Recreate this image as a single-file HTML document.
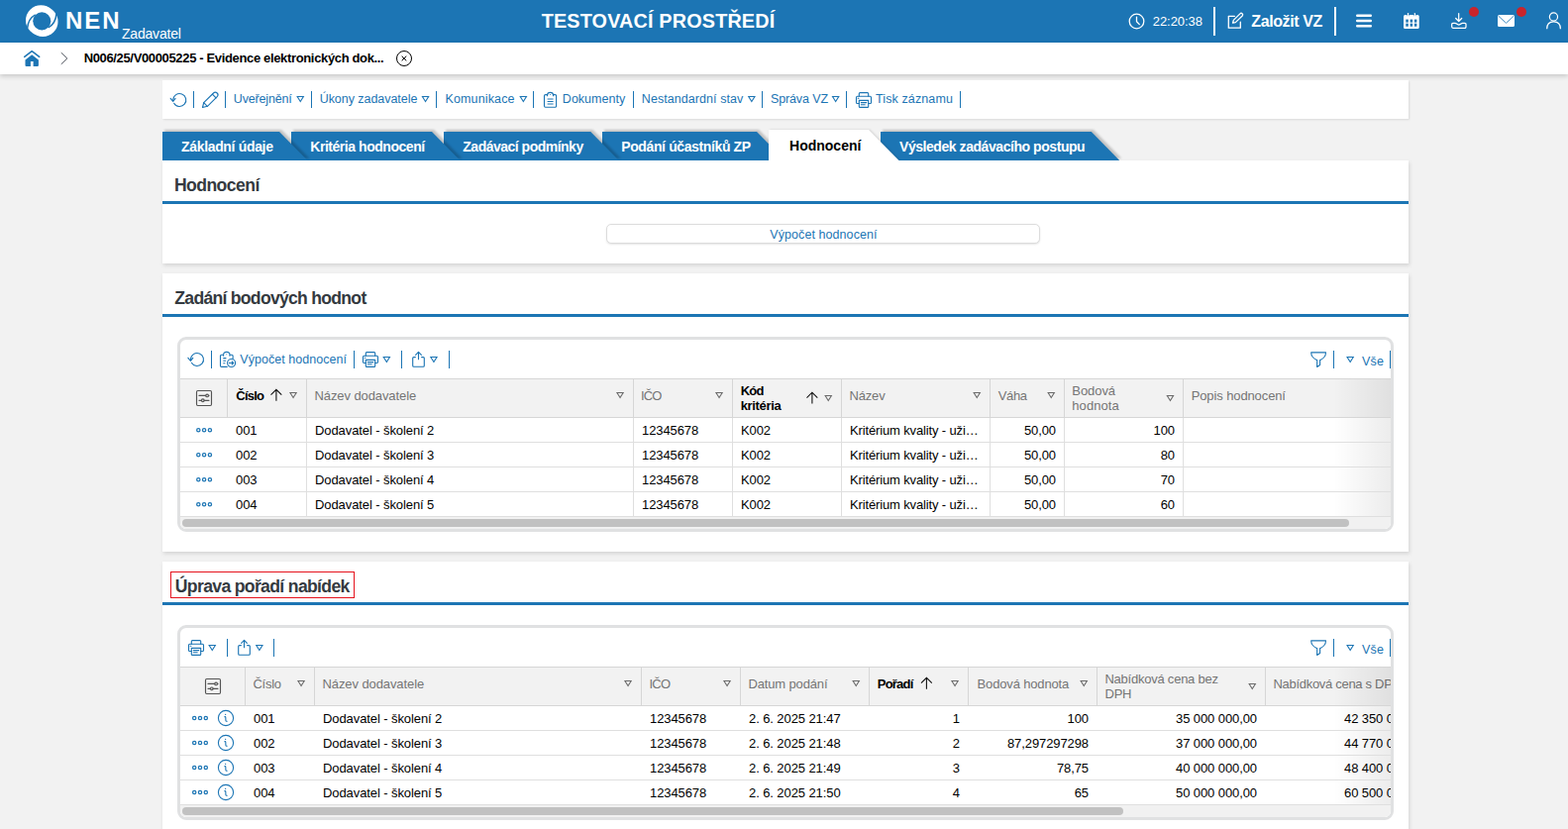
<!DOCTYPE html>
<html lang="cs">
<head>
<meta charset="utf-8">
<title>NEN – Hodnocení</title>
<style>
*{box-sizing:border-box;}
html,body{margin:0;padding:0;}
body{width:1583px;height:837px;overflow:hidden;background:#f2f2f2;font-family:"Liberation Sans",sans-serif;font-size:13px;color:#000;position:relative;}
svg{display:block;overflow:visible;}
.abs{position:absolute;}
.t{position:absolute;white-space:nowrap;line-height:1;}
#top{position:absolute;left:0;top:0;width:1583px;height:43px;background:#1c75b4;color:#fff;}
#top .vsep{position:absolute;top:7px;width:2px;height:29px;background:#fff;}
#top .dot{position:absolute;width:10px;height:10px;border-radius:50%;background:#c9252c;}
#crumb{position:absolute;left:0;top:43px;width:1583px;height:32px;background:#fff;box-shadow:0 2px 5px rgba(0,0,0,.18);}
.panel{position:absolute;left:164px;width:1258px;background:#fff;box-shadow:.5px 2px 4px rgba(0,0,0,.13);}
.blue{color:#1c75b4;}
.pline{position:absolute;left:164px;width:1258px;height:3px;background:#1c75b4;}

#tabs{position:absolute;left:0;top:120px;width:1583px;height:42px;overflow:hidden;}
.tab{position:absolute;top:13px;height:29px;filter:drop-shadow(2px -1.5px 1px rgba(0,0,0,.2));}
.tab i{display:block;width:100%;height:100%;background:#1c75b4;}
.tab.act{top:11px;height:31px;filter:drop-shadow(1.5px 0 1px rgba(0,0,0,.16));}
.tab.act i{background:#fff;}
#tablabels{position:absolute;left:0;top:0;z-index:30;}

.btn{position:absolute;border:1px solid #dcdcdc;border-radius:5px;background:#fff;box-shadow:0 1px 2px rgba(0,0,0,.10);}
.grid{position:absolute;border:3px solid #e0e1e2;border-radius:9px;background:#fff;}
.gwrap{position:absolute;overflow:hidden;background:#fff;border-radius:0 0 6px 6px;}
.gwrap table{border-collapse:separate;border-spacing:0;table-layout:fixed;position:absolute;left:0;top:0;}
.gwrap th{position:relative;height:40px;padding:0;background:#f2f2f2;border-top:1px solid #d6d6d6;border-bottom:1px solid #d6d6d6;border-right:1px solid #d6d6d6;font-weight:normal;text-align:left;color:#757575;}
.gwrap th.srt{color:#000;font-weight:bold;}
.gwrap td{position:relative;height:25px;padding:2px 8px 0;border-bottom:1px solid #dfdfdf;line-height:22px;white-space:nowrap;overflow:hidden;font-size:13px;letter-spacing:-.09px;color:#000;}
.gwrap td.el{letter-spacing:-.14px;}
.gwrap.vl td{border-right:1px solid #dfdfdf;}
.gwrap.vl td.ic{border-right:0;}
.gwrap td.r{text-align:right;}
#grid2 td.r{padding-right:9px;}
.gwrap td.ic{padding:0;}
.sbar{position:absolute;left:0;height:12px;width:100%;background:#f1f1f1;}
.sbar b{position:absolute;top:2px;height:8px;border-radius:4px;background:#c1c1c1;}
.fade{position:absolute;right:0;top:0;width:58px;background:linear-gradient(to right,rgba(0,0,0,0),rgba(0,0,0,.075));pointer-events:none;}
.redbox{position:absolute;border:1px solid #e5131d;}
.o{position:absolute;width:0;height:0;}
</style>
</head>
<body>
<div id="top">
<svg class="abs" style="left:25.7px;top:4.7px" width="32.5" height="32.3" viewBox="0 0 32.5 32.3">
<circle cx="15.3" cy="15.5" r="15.3" fill="#fff"/>
<circle cx="17.2" cy="16.8" r="15.3" fill="#fff"/>
<path d="M32.5 12.2L30.6 8.2L34 7.5Z M0 20.4L1.9 24.4L-1.5 25Z" fill="#1c75b4"/>
<circle cx="16.26" cy="16.34" r="9.05" fill="#1c75b4"/>
<path d="M1.6 23.6Q2.3 14 9.7 9.9" fill="none" stroke="#1c75b4" stroke-width="1.5"/>
<path d="M30.9 9.1Q30.2 18.7 22.8 22.8" fill="none" stroke="#1c75b4" stroke-width="1.5"/>
</svg>
<span class="t" id="nen" style="left:65.91px;top:8px;font-size:24px;line-height:26px;letter-spacing:1.98px;font-weight:bold;">NEN</span>
<span class="t" id="zad" style="left:123px;top:26px;font-size:14px;line-height:16px;letter-spacing:-0.204px;">Zadavatel</span>
<span class="t" id="env" style="left:546.7px;top:11px;font-size:19.8px;line-height:20px;letter-spacing:0.18px;font-weight:bold;">TESTOVACÍ PROSTŘEDÍ</span>
<svg class="abs" style="left:1139px;top:12.5px" width="17" height="17" viewBox="0 0 17 17" fill="none" stroke="#fff" stroke-width="1.3" stroke-linecap="round" stroke-linejoin="round">
<circle cx="8.5" cy="8.5" r="7.3"/><path d="M8.5 4.2V8.7L11.3 11.6"/></svg>
<span class="t" id="clock" style="left:1163.7px;top:14px;font-size:13px;line-height:15px;letter-spacing:-0.038px;">22:20:38</span>
<div class="vsep" style="left:1225px"></div>
<svg class="abs" style="left:1239px;top:12px" width="17" height="17" viewBox="0 0 17 17" fill="none" stroke="#fff" stroke-width="1.3" stroke-linecap="round" stroke-linejoin="round">
<path d="M7.4 4.4H1.3V16.2H13.3V10.2"/>
<path d="M12.9 1.9A1.5 1.5 0 0 1 15.2 4L8.3 10.6L5.6 11.2L6.3 8.4Z"/></svg>
<span class="t" id="zal" style="left:1263.3px;top:12.8px;font-size:16px;line-height:18px;letter-spacing:-0.41px;font-weight:bold;">Založit VZ</span>
<div class="vsep" style="left:1347px"></div>
<svg class="abs" style="left:1369px;top:14px" width="16" height="14" viewBox="0 0 16 14" fill="none" stroke="#fff" stroke-width="2.4" stroke-linecap="round"><path d="M1.2 1.7H14.8M1.2 7H14.8M1.2 12.3H14.8"/></svg>
<svg class="abs" style="left:1417px;top:13px" width="16" height="16" viewBox="0 0 16 16">
<rect x="0" y="2.1" width="15.7" height="13.8" rx="1.5" fill="#fff"/>
<rect x="3.9" y="0" width="1.3" height="3.6" rx=".6" fill="#fff"/>
<rect x="10.7" y="0" width="1.3" height="3.6" rx=".6" fill="#fff"/>
<g fill="#1c75b4">
<rect x="2.3" y="6.6" width="2.5" height="3"/><rect x="6.6" y="6.6" width="2.5" height="3"/><rect x="10.9" y="6.6" width="2.5" height="3"/>
<rect x="2.3" y="10.7" width="2.5" height="3"/><rect x="6.6" y="10.7" width="2.5" height="3"/><rect x="10.9" y="10.7" width="2.5" height="3"/>
<rect x="3.3" y="1" width=".5" height="2.2"/><rect x="5.3" y="1" width=".5" height="2.2"/><rect x="10.1" y="1" width=".5" height="2.2"/><rect x="12.1" y="1" width=".5" height="2.2"/>
</g></svg>
<svg class="abs" style="left:1465px;top:13px" width="16" height="16" viewBox="0 0 16 16" fill="none" stroke="#fff" stroke-width="1.25" stroke-linecap="round" stroke-linejoin="round">
<path d="M7.7 .5V8.2M4.7 5.5L7.7 8.5L10.7 5.5"/>
<path d="M.7 11.5A1.2 1.2 0 0 1 1.9 10.3H4.1C5.4 10.3 5.9 12 7.8 12S10.2 10.3 11.5 10.3H13.8A1.2 1.2 0 0 1 15 11.5V14.1A1.2 1.2 0 0 1 13.8 15.3H1.9A1.2 1.2 0 0 1 .7 14.1Z"/></svg>
<div class="dot" style="left:1483px;top:7px"></div>
<svg class="abs" style="left:1512px;top:15px" width="17" height="12" viewBox="0 0 17 12">
<rect x="0" y="0" width="17" height="12" rx="1.6" fill="#fff"/>
<path d="M.8 1.2L8.5 8.3L16.2 1.2" fill="none" stroke="#1c75b4" stroke-width=".8"/></svg>
<div class="dot" style="left:1531px;top:7px"></div>
<svg class="abs" style="left:1560px;top:13px" width="17" height="17" viewBox="0 0 17 17" fill="none" stroke="#fff" stroke-width="1.2" stroke-linecap="butt">
<circle cx="8.45" cy="4" r="4.1"/><path d="M1.7 16.2C1.7 11.4 4.6 8.9 8.55 8.9S15.4 11.4 15.4 16.2"/></svg>
</div>
<div id="crumb"></div>
<div id="crumbitems">
<svg class="abs" style="left:24px;top:51px" width="17" height="17" viewBox="0 0 17 17">
<path d="M.7 6.4L8.2 .7L15.7 6.4" fill="none" stroke="#1c75b4" stroke-width="1.5" stroke-linecap="round" stroke-linejoin="round"/>
<path d="M1.5 9.4L8.2 4.2L14.9 9.4V15A1 1 0 0 1 13.9 16H9.6V10.9H6.9V16H2.5A1 1 0 0 1 1.5 15Z" fill="#1c75b4"/></svg>
<svg class="abs" style="left:61px;top:53px" width="8" height="12" viewBox="0 0 8 12" fill="none" stroke="#3a3f4a" stroke-width=".95"><path d="M.8 .2L6.8 6L.8 11.8"/></svg>
<span class="t" id="bc" style="left:84.67px;top:52px;font-size:13px;line-height:14px;letter-spacing:-0.348px;color:#000;font-weight:bold;">N006/25/V00005225 - Evidence elektronických dok...</span>
<svg class="abs" style="left:400px;top:51px" width="16" height="16" viewBox="0 0 16 16" fill="none" stroke="#000" stroke-width="1"><circle cx="8" cy="8" r="7.5"/><path d="M5.7 5.7L10.3 10.3M10.3 5.7L5.7 10.3"/></svg>
</div>
<div class="panel" style="top:81px;height:39px;box-shadow:.5px 1px 2px rgba(0,0,0,.1)"></div>
<div id="toolbar" class="blue">
<svg class="abs" style="left:171px;top:92px" width="20" height="18" viewBox="171 92 20 18" fill="none" stroke="#1c75b4" stroke-width="1.12" stroke-linecap="round" stroke-linejoin="round"><path d="M175.67 104.25A6.5 6.5 0 1 0 174.80 100.89"/><path d="M172.20 99.29L174.70 102.29L177.10 99.39"/></svg>
<div class="abs" style="left:195px;top:92px;width:1px;height:17px;background:#1c75b4"></div>
<svg class="abs" style="left:203px;top:92px" width="19" height="19" viewBox="203 92 19 19" fill="none" stroke="#1c75b4" stroke-width="1.12" stroke-linecap="round" stroke-linejoin="round"><path d="M204.50 108.50L205.70 103.60L215.50 94.00A2.6 2.6 0 0 1 219.20 97.70L209.40 107.30Z"/><path d="M205.70 103.60L209.40 107.30M214.40 95.10L218.10 98.80"/></svg>
<div class="abs" style="left:227px;top:92px;width:1px;height:17px;background:#1c75b4"></div>
<span class="t" id="tb_Uve" style="left:235.86px;top:91.5px;font-size:12.5px;line-height:16px;letter-spacing:-0.17px;">Uveřejnění</span>
<svg class="abs" style="left:298px;top:96px" width="10" height="9" viewBox="298 96 10 9" fill="none" stroke="#1c75b4" stroke-width="1.1" stroke-linejoin="miter"><path d="M300.15 97.50H306.35L303.25 102.45Z"/></svg>
<div class="abs" style="left:314px;top:92px;width:1px;height:17px;background:#1c75b4"></div>
<span class="t" id="tb_Úko" style="left:322.67px;top:91.5px;font-size:12.5px;line-height:16px;letter-spacing:-0.042px;">Úkony zadavatele</span>
<svg class="abs" style="left:424px;top:96px" width="10" height="9" viewBox="424 96 10 9" fill="none" stroke="#1c75b4" stroke-width="1.1" stroke-linejoin="miter"><path d="M426.45 97.50H432.65L429.55 102.45Z"/></svg>
<div class="abs" style="left:440px;top:92px;width:1px;height:17px;background:#1c75b4"></div>
<span class="t" id="tb_Kom" style="left:449.48px;top:91.5px;font-size:12.5px;line-height:16px;letter-spacing:0.14px;">Komunikace</span>
<svg class="abs" style="left:523px;top:96px" width="10" height="9" viewBox="523 96 10 9" fill="none" stroke="#1c75b4" stroke-width="1.1" stroke-linejoin="miter"><path d="M525.25 97.50H531.45L528.35 102.45Z"/></svg>
<div class="abs" style="left:538px;top:92px;width:1px;height:17px;background:#1c75b4"></div>
<svg class="abs" style="left:548px;top:92px" width="16" height="19" viewBox="548 92 16 19" fill="none" stroke="#1c75b4" stroke-width="1.12" stroke-linecap="round" stroke-linejoin="round"><path d="M552.60 95.60H550.70A1.2 1.2 0 0 0 549.50 96.80V107.10A1.2 1.2 0 0 0 550.70 108.30H560.40A1.2 1.2 0 0 0 561.60 107.10V96.80A1.2 1.2 0 0 0 560.40 95.60H558.50"/><path d="M552.60 96.80V96.00A2.95 2.6 0 0 1 558.50 96.00V96.80"/><circle cx="555.55" cy="95.50" r=".55" fill="#1c75b4" stroke="none"/><path d="M552.60 100.00H558.60M552.60 102.50H558.60M552.60 105.00H558.60" stroke-linecap="butt"/></svg>
<span class="t" id="tb_Dok" style="left:567.86px;top:91.5px;font-size:12.5px;line-height:16px;letter-spacing:0.012px;">Dokumenty</span>
<div class="abs" style="left:639px;top:92px;width:1px;height:17px;background:#1c75b4"></div>
<span class="t" id="tb_Nes" style="left:647.86px;top:91.5px;font-size:12.5px;line-height:16px;letter-spacing:0.061px;">Nestandardní stav</span>
<svg class="abs" style="left:754px;top:96px" width="10" height="9" viewBox="754 96 10 9" fill="none" stroke="#1c75b4" stroke-width="1.1" stroke-linejoin="miter"><path d="M755.75 97.50H761.95L758.85 102.45Z"/></svg>
<div class="abs" style="left:769px;top:92px;width:1px;height:17px;background:#1c75b4"></div>
<span class="t" id="tb_Spr" style="left:777.91px;top:91.5px;font-size:12.5px;line-height:16px;letter-spacing:-0.109px;">Správa VZ</span>
<svg class="abs" style="left:839px;top:96px" width="10" height="9" viewBox="839 96 10 9" fill="none" stroke="#1c75b4" stroke-width="1.1" stroke-linejoin="miter"><path d="M840.55 97.50H846.75L843.65 102.45Z"/></svg>
<div class="abs" style="left:854px;top:92px;width:1px;height:17px;background:#1c75b4"></div>
<svg class="abs" style="left:863px;top:92px" width="18" height="19" viewBox="863 92 18 19" fill="none" stroke="#1c75b4" stroke-width="1.12" stroke-linecap="round" stroke-linejoin="round"><path d="M867.30 97.30V94.60A1 1 0 0 1 868.30 93.60H875.70A1 1 0 0 1 876.70 94.60V97.30"/><path d="M867.30 104.50H865.60A1.1 1.1 0 0 1 864.50 103.40V98.40A1.1 1.1 0 0 1 865.60 97.30H878.40A1.1 1.1 0 0 1 879.50 98.40V103.40A1.1 1.1 0 0 1 878.40 104.50H876.70"/><path d="M867.30 101.40H876.70V107.40A1 1 0 0 1 875.70 108.40H868.30A1 1 0 0 1 867.30 107.40Z"/><path d="M869.30 103.60H874.70M869.30 105.70H873.20M866.20 99.30H866.90"/></svg>
<span class="t" id="tb_Tis" style="left:884.0px;top:91.5px;font-size:12.5px;line-height:16px;letter-spacing:0.115px;">Tisk záznamu</span>
<div class="abs" style="left:969px;top:92px;width:1px;height:17px;background:#1c75b4"></div>
</div>
<div id="tabs">
<div class="tab" style="left:164px;width:146.5px;z-index:10"><i style="clip-path:polygon(0 0,118.0px 0,100% 100%,0 100%)"></i></div>
<div class="tab" style="left:294px;width:170.5px;z-index:9"><i style="clip-path:polygon(0 0,142.0px 0,100% 100%,0 100%)"></i></div>
<div class="tab" style="left:448px;width:176.8px;z-index:8"><i style="clip-path:polygon(0 0,148.3px 0,100% 100%,0 100%)"></i></div>
<div class="tab" style="left:608px;width:184.5px;z-index:7"><i style="clip-path:polygon(0 0,156.0px 0,100% 100%,0 100%)"></i></div>
<div class="tab act" style="left:776px;width:131.5px;z-index:20"><i style="clip-path:polygon(0 0,101.0px 0,100% 100%,0 100%)"></i></div>
<div class="tab" style="left:888.5px;width:241.8px;z-index:5"><i style="clip-path:polygon(0 0,213.3px 0,100% 100%,0 100%)"></i></div>
</div>
<div id="tablabels">
<span class="t" id="tab0" style="left:183px;top:140px;font-size:14px;line-height:16px;letter-spacing:-0.331px;color:#fff;font-weight:bold;">Základní údaje</span>
<span class="t" id="tab1" style="left:313.24px;top:140px;font-size:14px;line-height:16px;letter-spacing:-0.455px;color:#fff;font-weight:bold;">Kritéria hodnocení</span>
<span class="t" id="tab2" style="left:467.3px;top:140px;font-size:14px;line-height:16px;letter-spacing:-0.503px;color:#fff;font-weight:bold;">Zadávací podmínky</span>
<span class="t" id="tab3" style="left:627.24px;top:140px;font-size:14px;line-height:16px;letter-spacing:-0.38px;color:#fff;font-weight:bold;">Podání účastníků ZP</span>
<span class="t" id="tab4" style="left:797.05px;top:139px;font-size:14px;line-height:16px;letter-spacing:-0.004px;color:#000;font-weight:bold;">Hodnocení</span>
<span class="t" id="tab5" style="left:908px;top:140px;font-size:14px;line-height:16px;letter-spacing:-0.443px;color:#fff;font-weight:bold;">Výsledek zadávacího postupu</span>
</div>
<div class="panel" style="top:162px;height:104px"></div>
<div class="pline" style="top:203px"></div>
<span class="t" id="ttl1" style="left:175.91px;top:175.9px;font-size:17.6px;line-height:22px;letter-spacing:-0.562px;color:#343a40;font-weight:bold;">Hodnocení</span>
<div class="btn" style="left:612px;top:226px;width:438px;height:20px"></div>
<span class="t" id="btn1" style="left:777.3px;top:229px;font-size:12.5px;line-height:16px;letter-spacing:0.072px;color:#1c75b4;">Výpočet hodnocení</span>
<div class="panel" style="top:276px;height:281px"></div>
<div class="pline" style="top:317px"></div>
<span class="t" id="ttl2" style="left:176.3px;top:290.0px;font-size:17.6px;line-height:22px;letter-spacing:-0.724px;color:#343a40;font-weight:bold;">Zadání bodových hodnot</span>
<div class="grid" style="left:179px;top:340px;width:1228px;height:197px"></div>
<svg class="abs" style="left:189px;top:354px" width="20" height="18" viewBox="189 354 20 18" fill="none" stroke="#1c75b4" stroke-width="1.12" stroke-linecap="round" stroke-linejoin="round"><path d="M193.37 366.25A6.5 6.5 0 1 0 192.50 362.89"/><path d="M189.90 361.29L192.40 364.29L194.80 361.39"/></svg>
<div class="abs" style="left:213px;top:354px;width:1px;height:18px;background:#1c75b4"></div>
<svg class="abs" style="left:221px;top:354px" width="18" height="18" viewBox="221 354 18 18" fill="none" stroke="#1c75b4" stroke-width="1.12" stroke-linecap="round" stroke-linejoin="round"><path d="M225.40 358.20H223.60A1.1 1.1 0 0 0 222.50 359.30V369.30A1.1 1.1 0 0 0 223.60 370.40H229.20"/><path d="M232.20 358.20H234.00A1.1 1.1 0 0 1 235.10 359.30V362.20"/><path d="M225.60 359.20V358.40A3.2 3 0 0 1 232.00 358.40V359.20"/><circle cx="228.80" cy="357.80" r=".5" fill="#1c75b4" stroke="none"/><path d="M225.30 361.60H228.40M225.30 364.20H228.00M225.30 366.80H227.40" stroke-linecap="butt"/><circle cx="233.60" cy="366.50" r="4"/><path d="M231.40 366.50H235.60M234.10 364.90L235.70 366.50L234.10 368.10"/></svg>
<span class="t" id="g1calc" style="left:242.3px;top:355.2px;font-size:12.5px;line-height:16px;letter-spacing:0.041px;color:#1c75b4;">Výpočet hodnocení</span>
<div class="abs" style="left:357px;top:354px;width:1px;height:18px;background:#1c75b4"></div>
<svg class="abs" style="left:365.2px;top:354.2px" width="18" height="19" viewBox="365.2 354.2 18 19" fill="none" stroke="#1c75b4" stroke-width="1.12" stroke-linecap="round" stroke-linejoin="round"><path d="M369.50 359.50V356.80A1 1 0 0 1 370.50 355.80H377.90A1 1 0 0 1 378.90 356.80V359.50"/><path d="M369.50 366.70H367.80A1.1 1.1 0 0 1 366.70 365.60V360.60A1.1 1.1 0 0 1 367.80 359.50H380.60A1.1 1.1 0 0 1 381.70 360.60V365.60A1.1 1.1 0 0 1 380.60 366.70H378.90"/><path d="M369.50 363.60H378.90V369.60A1 1 0 0 1 377.90 370.60H370.50A1 1 0 0 1 369.50 369.60Z"/><path d="M371.50 365.80H376.90M371.50 367.90H375.40M368.40 361.50H369.10"/></svg>
<svg class="abs" style="left:385px;top:359px" width="10" height="9" viewBox="385 359 10 9" fill="none" stroke="#1c75b4" stroke-width="1.1" stroke-linejoin="miter"><path d="M387.25 360.50H393.45L390.35 365.45Z"/></svg>
<div class="abs" style="left:405px;top:354px;width:1px;height:18px;background:#1c75b4"></div>
<svg class="abs" style="left:415.2px;top:354px" width="16" height="18" viewBox="415.2 354 16 18" fill="none" stroke="#1c75b4" stroke-width="1.12" stroke-linecap="round" stroke-linejoin="round"><path d="M419.60 360.60H417.90A1 1 0 0 0 416.90 361.60V369.20A1 1 0 0 0 417.90 370.20H427.50A1 1 0 0 0 428.50 369.20V361.60A1 1 0 0 0 427.50 360.60H425.80"/><path d="M422.70 362.80V355.60M419.80 358.30L422.70 355.40L425.60 358.30"/></svg>
<svg class="abs" style="left:433px;top:359px" width="10" height="9" viewBox="433 359 10 9" fill="none" stroke="#1c75b4" stroke-width="1.1" stroke-linejoin="miter"><path d="M434.85 360.50H441.05L437.95 365.45Z"/></svg>
<div class="abs" style="left:453px;top:354px;width:1px;height:18px;background:#1c75b4"></div>
<svg class="abs" style="left:1322px;top:354px" width="18" height="18" viewBox="1322 354 18 18" fill="none" stroke="#1c75b4" stroke-width="1.12" stroke-linecap="round" stroke-linejoin="round"><path d="M1323.70 355.90H1338.50C1338.50 359.60 1335.60 362.60 1332.60 363.60V368.60L1329.70 370.40V363.60C1326.60 362.60 1323.70 359.60 1323.70 355.90Z"/></svg>
<div class="abs" style="left:1346px;top:354px;width:1px;height:18px;background:#1c75b4"></div>
<svg class="abs" style="left:1358px;top:359px" width="10" height="9" viewBox="1358 359 10 9" fill="none" stroke="#1c75b4" stroke-width="1.1" stroke-linejoin="miter"><path d="M1360.05 360.50H1366.25L1363.15 365.45Z"/></svg>
<span class="t" id="vse0" style="left:1375px;top:356.7px;font-size:12.5px;line-height:16px;letter-spacing:0.18px;color:#1c75b4;">Vše</span>
<div class="abs" style="left:1403px;top:354px;width:1px;height:18px;background:#1c75b4"></div>
<div class="gwrap vl" id="grid1" style="left:182px;top:382px;width:1222px;height:152px">
<table style="width:1313px"><colgroup><col style="width:48px"><col style="width:80px"><col style="width:330px"><col style="width:100px"><col style="width:110px"><col style="width:150px"><col style="width:75px"><col style="width:120px"><col style="width:300px"></colgroup>
<thead><tr>
<th><div class="o" style="left:-182px;top:-383px"><svg class="abs" style="left:197px;top:393px" width="18" height="18" viewBox="197 393 18 18" fill="none" stroke="#555" stroke-width="1.15" stroke-linecap="round" stroke-linejoin="round"><rect x="198.5" y="394.5" width="15" height="15" rx="1.2"/><path d="M201 399.4H207.6M210.6 399.4H211M201 404.3H203.4M206.2 404.3H211"/><circle cx="209.1" cy="399.4" r="1.35"/><circle cx="204.8" cy="404.3" r="1.35"/></svg></div></th>
<th class="srt"><div class="o" style="left:-230px;top:-383px"><span class="t" id="h1_cis" style="left:238.3px;top:392.0px;font-size:13px;line-height:15px;letter-spacing:-0.782px;color:#000;font-weight:bold;">Číslo</span><svg class="abs" style="left:272px;top:391px" width="14" height="15" viewBox="272 391 14 15" fill="none" stroke="#111" stroke-width="1.1" stroke-linecap="round" stroke-linejoin="round"><path d="M278.90 404.70V393.30M273.50 398.70L278.90 393.30L284.30 398.70" stroke-linecap="butt" stroke-linejoin="miter"/></svg><svg class="abs" style="left:291px;top:395px" width="10" height="9" viewBox="291 395 10 9" fill="none" stroke="#6b6b6b" stroke-width="1.1" stroke-linejoin="miter"><path d="M292.95 396.50H299.15L296.05 401.45Z"/></svg></div></th>
<th><div class="o" style="left:-310px;top:-383px"><span class="t" id="h1_naz" style="left:317.48px;top:392.0px;font-size:13px;line-height:15px;letter-spacing:-0.09px;">Název dodavatele</span><svg class="abs" style="left:621px;top:395px" width="10" height="9" viewBox="621 395 10 9" fill="none" stroke="#6b6b6b" stroke-width="1.1" stroke-linejoin="miter"><path d="M622.95 396.50H629.15L626.05 401.45Z"/></svg></div></th>
<th><div class="o" style="left:-640px;top:-383px"><span class="t" id="h1_ico" style="left:647.04px;top:392.0px;font-size:13px;line-height:15px;letter-spacing:-0.855px;">IČO</span><svg class="abs" style="left:721px;top:395px" width="10" height="9" viewBox="721 395 10 9" fill="none" stroke="#6b6b6b" stroke-width="1.1" stroke-linejoin="miter"><path d="M722.95 396.50H729.15L726.05 401.45Z"/></svg></div></th>
<th class="srt"><div class="o" style="left:-740px;top:-383px"><span class="t" id="h1_kod_0" style="left:747.67px;top:386.7px;font-size:13px;line-height:15px;letter-spacing:-0.72px;font-weight:bold;">Kód</span><span class="t" id="h1_kod_1" style="left:747.67px;top:401.7px;font-size:13px;line-height:15px;letter-spacing:-0.335px;font-weight:bold;">kritéria</span><svg class="abs" style="left:813px;top:394px" width="14" height="15" viewBox="813 394 14 15" fill="none" stroke="#111" stroke-width="1.1" stroke-linecap="round" stroke-linejoin="round"><path d="M819.90 407.60V396.20M814.50 401.60L819.90 396.20L825.30 401.60" stroke-linecap="butt" stroke-linejoin="miter"/></svg><svg class="abs" style="left:831px;top:398px" width="10" height="9" viewBox="831 398 10 9" fill="none" stroke="#6b6b6b" stroke-width="1.1" stroke-linejoin="miter"><path d="M833.15 399.50H839.35L836.25 404.45Z"/></svg></div></th>
<th><div class="o" style="left:-850px;top:-383px"><span class="t" id="h1_nzv" style="left:857.48px;top:392.0px;font-size:13px;line-height:15px;letter-spacing:-0.163px;">Název</span><svg class="abs" style="left:981px;top:395px" width="10" height="9" viewBox="981 395 10 9" fill="none" stroke="#6b6b6b" stroke-width="1.1" stroke-linejoin="miter"><path d="M983.15 396.50H989.35L986.25 401.45Z"/></svg></div></th>
<th><div class="o" style="left:-1000px;top:-383px"><span class="t" id="h1_vah" style="left:1007.8px;top:392.0px;font-size:13px;line-height:15px;letter-spacing:-0.36px;">Váha</span><svg class="abs" style="left:1056px;top:395px" width="10" height="9" viewBox="1056 395 10 9" fill="none" stroke="#6b6b6b" stroke-width="1.1" stroke-linejoin="miter"><path d="M1058.15 396.50H1064.35L1061.25 401.45Z"/></svg></div></th>
<th><div class="o" style="left:-1075px;top:-383px"><span class="t" id="h1_bod_0" style="left:1082.29px;top:386.7px;font-size:13px;line-height:15px;letter-spacing:-0.054px;">Bodová</span><span class="t" id="h1_bod_1" style="left:1082.29px;top:401.7px;font-size:13px;line-height:15px;letter-spacing:0.075px;">hodnota</span><svg class="abs" style="left:1176px;top:398px" width="10" height="9" viewBox="1176 398 10 9" fill="none" stroke="#6b6b6b" stroke-width="1.1" stroke-linejoin="miter"><path d="M1178.35 399.50H1184.55L1181.45 404.45Z"/></svg></div></th>
<th><div class="o" style="left:-1195px;top:-383px"><span class="t" id="h1_pop" style="left:1202.67px;top:392.0px;font-size:13px;line-height:15px;letter-spacing:-0.109px;">Popis hodnocení</span></div></th>
</tr></thead><tbody>
<tr>
<td class="ic"><div class="o" style="left:-182px;top:-422px"><svg class="abs" style="left:197px;top:431px" width="18" height="7" viewBox="197 431 18 7" fill="none" stroke="#1c75b4" stroke-width="1.25" stroke-linecap="round" stroke-linejoin="round"><circle cx="200.30" cy="434.30" r="1.65"/><circle cx="206.10" cy="434.30" r="1.65"/><circle cx="211.90" cy="434.30" r="1.65"/></svg></div></td>
<td>001</td>
<td>Dodavatel - školení 2</td>
<td>12345678</td>
<td>K002</td>
<td class="el">Kritérium kvality - uži…</td>
<td class="r">50,00</td>
<td class="r">100</td>
<td></td>
</tr>
<tr>
<td class="ic"><div class="o" style="left:-182px;top:-447px"><svg class="abs" style="left:197px;top:456px" width="18" height="7" viewBox="197 456 18 7" fill="none" stroke="#1c75b4" stroke-width="1.25" stroke-linecap="round" stroke-linejoin="round"><circle cx="200.30" cy="459.30" r="1.65"/><circle cx="206.10" cy="459.30" r="1.65"/><circle cx="211.90" cy="459.30" r="1.65"/></svg></div></td>
<td>002</td>
<td>Dodavatel - školení 3</td>
<td>12345678</td>
<td>K002</td>
<td class="el">Kritérium kvality - uži…</td>
<td class="r">50,00</td>
<td class="r">80</td>
<td></td>
</tr>
<tr>
<td class="ic"><div class="o" style="left:-182px;top:-472px"><svg class="abs" style="left:197px;top:481px" width="18" height="7" viewBox="197 481 18 7" fill="none" stroke="#1c75b4" stroke-width="1.25" stroke-linecap="round" stroke-linejoin="round"><circle cx="200.30" cy="484.30" r="1.65"/><circle cx="206.10" cy="484.30" r="1.65"/><circle cx="211.90" cy="484.30" r="1.65"/></svg></div></td>
<td>003</td>
<td>Dodavatel - školení 4</td>
<td>12345678</td>
<td>K002</td>
<td class="el">Kritérium kvality - uži…</td>
<td class="r">50,00</td>
<td class="r">70</td>
<td></td>
</tr>
<tr>
<td class="ic"><div class="o" style="left:-182px;top:-497px"><svg class="abs" style="left:197px;top:506px" width="18" height="7" viewBox="197 506 18 7" fill="none" stroke="#1c75b4" stroke-width="1.25" stroke-linecap="round" stroke-linejoin="round"><circle cx="200.30" cy="509.30" r="1.65"/><circle cx="206.10" cy="509.30" r="1.65"/><circle cx="211.90" cy="509.30" r="1.65"/></svg></div></td>
<td>004</td>
<td>Dodavatel - školení 5</td>
<td>12345678</td>
<td>K002</td>
<td class="el">Kritérium kvality - uži…</td>
<td class="r">50,00</td>
<td class="r">60</td>
<td></td>
</tr>
</tbody></table>
<div class="fade" style="top:1px;height:38px"></div><div class="fade" style="top:40px;height:24px"></div><div class="fade" style="top:65px;height:24px"></div><div class="fade" style="top:90px;height:24px"></div><div class="fade" style="top:115px;height:24px"></div>
<div class="sbar" style="top:140px"><b style="left:2px;width:1178px"></b></div>
</div>
<div class="panel" style="top:567px;height:281px"></div>
<div class="pline" style="top:608px"></div>
<div class="redbox" style="left:172px;top:577px;width:186px;height:27px"></div>
<span class="t" id="ttl3" style="left:176.8px;top:581.0px;font-size:17.6px;line-height:22px;letter-spacing:-0.657px;color:#343a40;font-weight:bold;">Úprava pořadí nabídek</span>
<div class="grid" style="left:179px;top:631px;width:1228px;height:197px"></div>
<svg class="abs" style="left:189px;top:645.2px" width="18" height="19" viewBox="189 645.2 18 19" fill="none" stroke="#1c75b4" stroke-width="1.12" stroke-linecap="round" stroke-linejoin="round"><path d="M193.30 650.50V647.80A1 1 0 0 1 194.30 646.80H201.70A1 1 0 0 1 202.70 647.80V650.50"/><path d="M193.30 657.70H191.60A1.1 1.1 0 0 1 190.50 656.60V651.60A1.1 1.1 0 0 1 191.60 650.50H204.40A1.1 1.1 0 0 1 205.50 651.60V656.60A1.1 1.1 0 0 1 204.40 657.70H202.70"/><path d="M193.30 654.60H202.70V660.60A1 1 0 0 1 201.70 661.60H194.30A1 1 0 0 1 193.30 660.60Z"/><path d="M195.30 656.80H200.70M195.30 658.90H199.20M192.20 652.50H192.90"/></svg>
<svg class="abs" style="left:209px;top:650px" width="10" height="9" viewBox="209 650 10 9" fill="none" stroke="#1c75b4" stroke-width="1.1" stroke-linejoin="miter"><path d="M211.15 651.50H217.35L214.25 656.45Z"/></svg>
<div class="abs" style="left:229px;top:645px;width:1px;height:18px;background:#1c75b4"></div>
<svg class="abs" style="left:238.8px;top:645px" width="16" height="18" viewBox="238.8 645 16 18" fill="none" stroke="#1c75b4" stroke-width="1.12" stroke-linecap="round" stroke-linejoin="round"><path d="M243.20 651.60H241.50A1 1 0 0 0 240.50 652.60V660.20A1 1 0 0 0 241.50 661.20H251.10A1 1 0 0 0 252.10 660.20V652.60A1 1 0 0 0 251.10 651.60H249.40"/><path d="M246.30 653.80V646.60M243.40 649.30L246.30 646.40L249.20 649.30"/></svg>
<svg class="abs" style="left:257px;top:650px" width="10" height="9" viewBox="257 650 10 9" fill="none" stroke="#1c75b4" stroke-width="1.1" stroke-linejoin="miter"><path d="M258.75 651.50H264.95L261.85 656.45Z"/></svg>
<div class="abs" style="left:276px;top:645px;width:1px;height:18px;background:#1c75b4"></div>
<svg class="abs" style="left:1322px;top:645px" width="18" height="18" viewBox="1322 645 18 18" fill="none" stroke="#1c75b4" stroke-width="1.12" stroke-linecap="round" stroke-linejoin="round"><path d="M1323.70 646.90H1338.50C1338.50 650.60 1335.60 653.60 1332.60 654.60V659.60L1329.70 661.40V654.60C1326.60 653.60 1323.70 650.60 1323.70 646.90Z"/></svg>
<div class="abs" style="left:1346px;top:645px;width:1px;height:18px;background:#1c75b4"></div>
<svg class="abs" style="left:1358px;top:650px" width="10" height="9" viewBox="1358 650 10 9" fill="none" stroke="#1c75b4" stroke-width="1.1" stroke-linejoin="miter"><path d="M1360.05 651.50H1366.25L1363.15 656.45Z"/></svg>
<span class="t" id="vse291" style="left:1375px;top:647.7px;font-size:12.5px;line-height:16px;letter-spacing:0.18px;color:#1c75b4;">Vše</span>
<div class="abs" style="left:1403px;top:645px;width:1px;height:18px;background:#1c75b4"></div>
<div class="gwrap" id="grid2" style="left:182px;top:673px;width:1222px;height:152px">
<table style="width:1266px"><colgroup><col style="width:66px"><col style="width:70px"><col style="width:330px"><col style="width:100px"><col style="width:130px"><col style="width:100px"><col style="width:130px"><col style="width:170px"><col style="width:170px"></colgroup>
<thead><tr>
<th><div class="o" style="left:-182px;top:-674px"><svg class="abs" style="left:206px;top:684px" width="18" height="18" viewBox="206 684 18 18" fill="none" stroke="#555" stroke-width="1.15" stroke-linecap="round" stroke-linejoin="round"><rect x="207.5" y="685.5" width="15" height="15" rx="1.2"/><path d="M210 690.4H216.6M219.6 690.4H220M210 695.3H212.4M215.2 695.3H220"/><circle cx="218.1" cy="690.4" r="1.35"/><circle cx="213.8" cy="695.3" r="1.35"/></svg></div></th>
<th><div class="o" style="left:-248px;top:-674px"><span class="t" id="h2_cis" style="left:255.48px;top:683.0px;font-size:13px;line-height:15px;letter-spacing:-0.27px;">Číslo</span><svg class="abs" style="left:299px;top:686px" width="10" height="9" viewBox="299 686 10 9" fill="none" stroke="#6b6b6b" stroke-width="1.1" stroke-linejoin="miter"><path d="M300.95 687.50H307.15L304.05 692.45Z"/></svg></div></th>
<th><div class="o" style="left:-318px;top:-674px"><span class="t" id="h2_naz" style="left:325.48px;top:683.0px;font-size:13px;line-height:15px;letter-spacing:-0.09px;">Název dodavatele</span><svg class="abs" style="left:629px;top:686px" width="10" height="9" viewBox="629 686 10 9" fill="none" stroke="#6b6b6b" stroke-width="1.1" stroke-linejoin="miter"><path d="M630.95 687.50H637.15L634.05 692.45Z"/></svg></div></th>
<th><div class="o" style="left:-648px;top:-674px"><span class="t" id="h2_ico" style="left:655.48px;top:683.0px;font-size:13px;line-height:15px;letter-spacing:-0.765px;">IČO</span><svg class="abs" style="left:729px;top:686px" width="10" height="9" viewBox="729 686 10 9" fill="none" stroke="#6b6b6b" stroke-width="1.1" stroke-linejoin="miter"><path d="M730.95 687.50H737.15L734.05 692.45Z"/></svg></div></th>
<th><div class="o" style="left:-748px;top:-674px"><span class="t" id="h2_dat" style="left:755.48px;top:683.0px;font-size:13px;line-height:15px;letter-spacing:-0.149px;">Datum podání</span><svg class="abs" style="left:859px;top:686px" width="10" height="9" viewBox="859 686 10 9" fill="none" stroke="#6b6b6b" stroke-width="1.1" stroke-linejoin="miter"><path d="M861.15 687.50H867.35L864.25 692.45Z"/></svg></div></th>
<th class="srt"><div class="o" style="left:-878px;top:-674px"><span class="t" id="h2_por" style="left:885.86px;top:683.0px;font-size:13px;line-height:15px;letter-spacing:-0.81px;color:#000;font-weight:bold;">Pořadí</span><svg class="abs" style="left:928px;top:682px" width="14" height="15" viewBox="928 682 14 15" fill="none" stroke="#111" stroke-width="1.1" stroke-linecap="round" stroke-linejoin="round"><path d="M935.40 695.70V684.30M930.00 689.70L935.40 684.30L940.80 689.70" stroke-linecap="butt" stroke-linejoin="miter"/></svg><svg class="abs" style="left:959px;top:686px" width="10" height="9" viewBox="959 686 10 9" fill="none" stroke="#6b6b6b" stroke-width="1.1" stroke-linejoin="miter"><path d="M960.95 687.50H967.15L964.05 692.45Z"/></svg></div></th>
<th><div class="o" style="left:-978px;top:-674px"><span class="t" id="h2_bod" style="left:986.6px;top:683.0px;font-size:13px;line-height:15px;letter-spacing:-0.159px;">Bodová hodnota</span><svg class="abs" style="left:1089px;top:686px" width="10" height="9" viewBox="1089 686 10 9" fill="none" stroke="#6b6b6b" stroke-width="1.1" stroke-linejoin="miter"><path d="M1091.15 687.50H1097.35L1094.25 692.45Z"/></svg></div></th>
<th><div class="o" style="left:-1108px;top:-674px"><span class="t" id="h2_nab_0" style="left:1115.48px;top:677.7px;font-size:13px;line-height:15px;letter-spacing:-0.236px;">Nabídková cena bez</span><span class="t" id="h2_nab_1" style="left:1115.48px;top:692.7px;font-size:13px;line-height:15px;letter-spacing:-0.225px;">DPH</span><svg class="abs" style="left:1259px;top:689px" width="10" height="9" viewBox="1259 689 10 9" fill="none" stroke="#6b6b6b" stroke-width="1.1" stroke-linejoin="miter"><path d="M1261.15 690.50H1267.35L1264.25 695.45Z"/></svg></div></th>
<th><div class="o" style="left:-1278px;top:-674px"><span class="t" id="h2_nas" style="left:1285.48px;top:683.0px;font-size:13px;line-height:15px;letter-spacing:-0.297px;">Nabídková cena s DPH</span></div></th>
</tr></thead><tbody>
<tr>
<td class="ic"><div class="o" style="left:-182px;top:-713px"><svg class="abs" style="left:193px;top:722px" width="18" height="7" viewBox="193 722 18 7" fill="none" stroke="#1c75b4" stroke-width="1.25" stroke-linecap="round" stroke-linejoin="round"><circle cx="196.20" cy="725.00" r="1.65"/><circle cx="202.00" cy="725.00" r="1.65"/><circle cx="207.80" cy="725.00" r="1.65"/></svg><svg class="abs" style="left:219px;top:716px" width="18" height="18" viewBox="219 716 18 18" fill="none" stroke="#1c75b4" stroke-width="1.1" stroke-linecap="round" stroke-linejoin="round"><circle cx="228" cy="725" r="7.6"/><path d="M227.60 721.40h.1M226.80 723.70q.9 -.5 1 .5l.1 3q.1 1.3 1.3 1"/></svg></div></td>
<td>001</td>
<td>Dodavatel - školení 2</td>
<td>12345678</td>
<td>2. 6. 2025 21:47</td>
<td class="r">1</td>
<td class="r">100</td>
<td class="r">35 000 000,00</td>
<td class="r">42 350 000,00</td>
</tr>
<tr>
<td class="ic"><div class="o" style="left:-182px;top:-738px"><svg class="abs" style="left:193px;top:747px" width="18" height="7" viewBox="193 747 18 7" fill="none" stroke="#1c75b4" stroke-width="1.25" stroke-linecap="round" stroke-linejoin="round"><circle cx="196.20" cy="750.00" r="1.65"/><circle cx="202.00" cy="750.00" r="1.65"/><circle cx="207.80" cy="750.00" r="1.65"/></svg><svg class="abs" style="left:219px;top:741px" width="18" height="18" viewBox="219 741 18 18" fill="none" stroke="#1c75b4" stroke-width="1.1" stroke-linecap="round" stroke-linejoin="round"><circle cx="228" cy="750" r="7.6"/><path d="M227.60 746.40h.1M226.80 748.70q.9 -.5 1 .5l.1 3q.1 1.3 1.3 1"/></svg></div></td>
<td>002</td>
<td>Dodavatel - školení 3</td>
<td>12345678</td>
<td>2. 6. 2025 21:48</td>
<td class="r">2</td>
<td class="r">87,297297298</td>
<td class="r">37 000 000,00</td>
<td class="r">44 770 000,00</td>
</tr>
<tr>
<td class="ic"><div class="o" style="left:-182px;top:-763px"><svg class="abs" style="left:193px;top:772px" width="18" height="7" viewBox="193 772 18 7" fill="none" stroke="#1c75b4" stroke-width="1.25" stroke-linecap="round" stroke-linejoin="round"><circle cx="196.20" cy="775.00" r="1.65"/><circle cx="202.00" cy="775.00" r="1.65"/><circle cx="207.80" cy="775.00" r="1.65"/></svg><svg class="abs" style="left:219px;top:766px" width="18" height="18" viewBox="219 766 18 18" fill="none" stroke="#1c75b4" stroke-width="1.1" stroke-linecap="round" stroke-linejoin="round"><circle cx="228" cy="775" r="7.6"/><path d="M227.60 771.40h.1M226.80 773.70q.9 -.5 1 .5l.1 3q.1 1.3 1.3 1"/></svg></div></td>
<td>003</td>
<td>Dodavatel - školení 4</td>
<td>12345678</td>
<td>2. 6. 2025 21:49</td>
<td class="r">3</td>
<td class="r">78,75</td>
<td class="r">40 000 000,00</td>
<td class="r">48 400 000,00</td>
</tr>
<tr>
<td class="ic"><div class="o" style="left:-182px;top:-788px"><svg class="abs" style="left:193px;top:797px" width="18" height="7" viewBox="193 797 18 7" fill="none" stroke="#1c75b4" stroke-width="1.25" stroke-linecap="round" stroke-linejoin="round"><circle cx="196.20" cy="800.00" r="1.65"/><circle cx="202.00" cy="800.00" r="1.65"/><circle cx="207.80" cy="800.00" r="1.65"/></svg><svg class="abs" style="left:219px;top:791px" width="18" height="18" viewBox="219 791 18 18" fill="none" stroke="#1c75b4" stroke-width="1.1" stroke-linecap="round" stroke-linejoin="round"><circle cx="228" cy="800" r="7.6"/><path d="M227.60 796.40h.1M226.80 798.70q.9 -.5 1 .5l.1 3q.1 1.3 1.3 1"/></svg></div></td>
<td>004</td>
<td>Dodavatel - školení 5</td>
<td>12345678</td>
<td>2. 6. 2025 21:50</td>
<td class="r">4</td>
<td class="r">65</td>
<td class="r">50 000 000,00</td>
<td class="r">60 500 000,00</td>
</tr>
</tbody></table>
<div class="fade" style="top:1px;height:38px"></div><div class="fade" style="top:40px;height:24px"></div><div class="fade" style="top:65px;height:24px"></div><div class="fade" style="top:90px;height:24px"></div><div class="fade" style="top:115px;height:24px"></div>
<div class="sbar" style="top:140px"><b style="left:2px;width:950px"></b></div>
</div>
</body>
</html>
